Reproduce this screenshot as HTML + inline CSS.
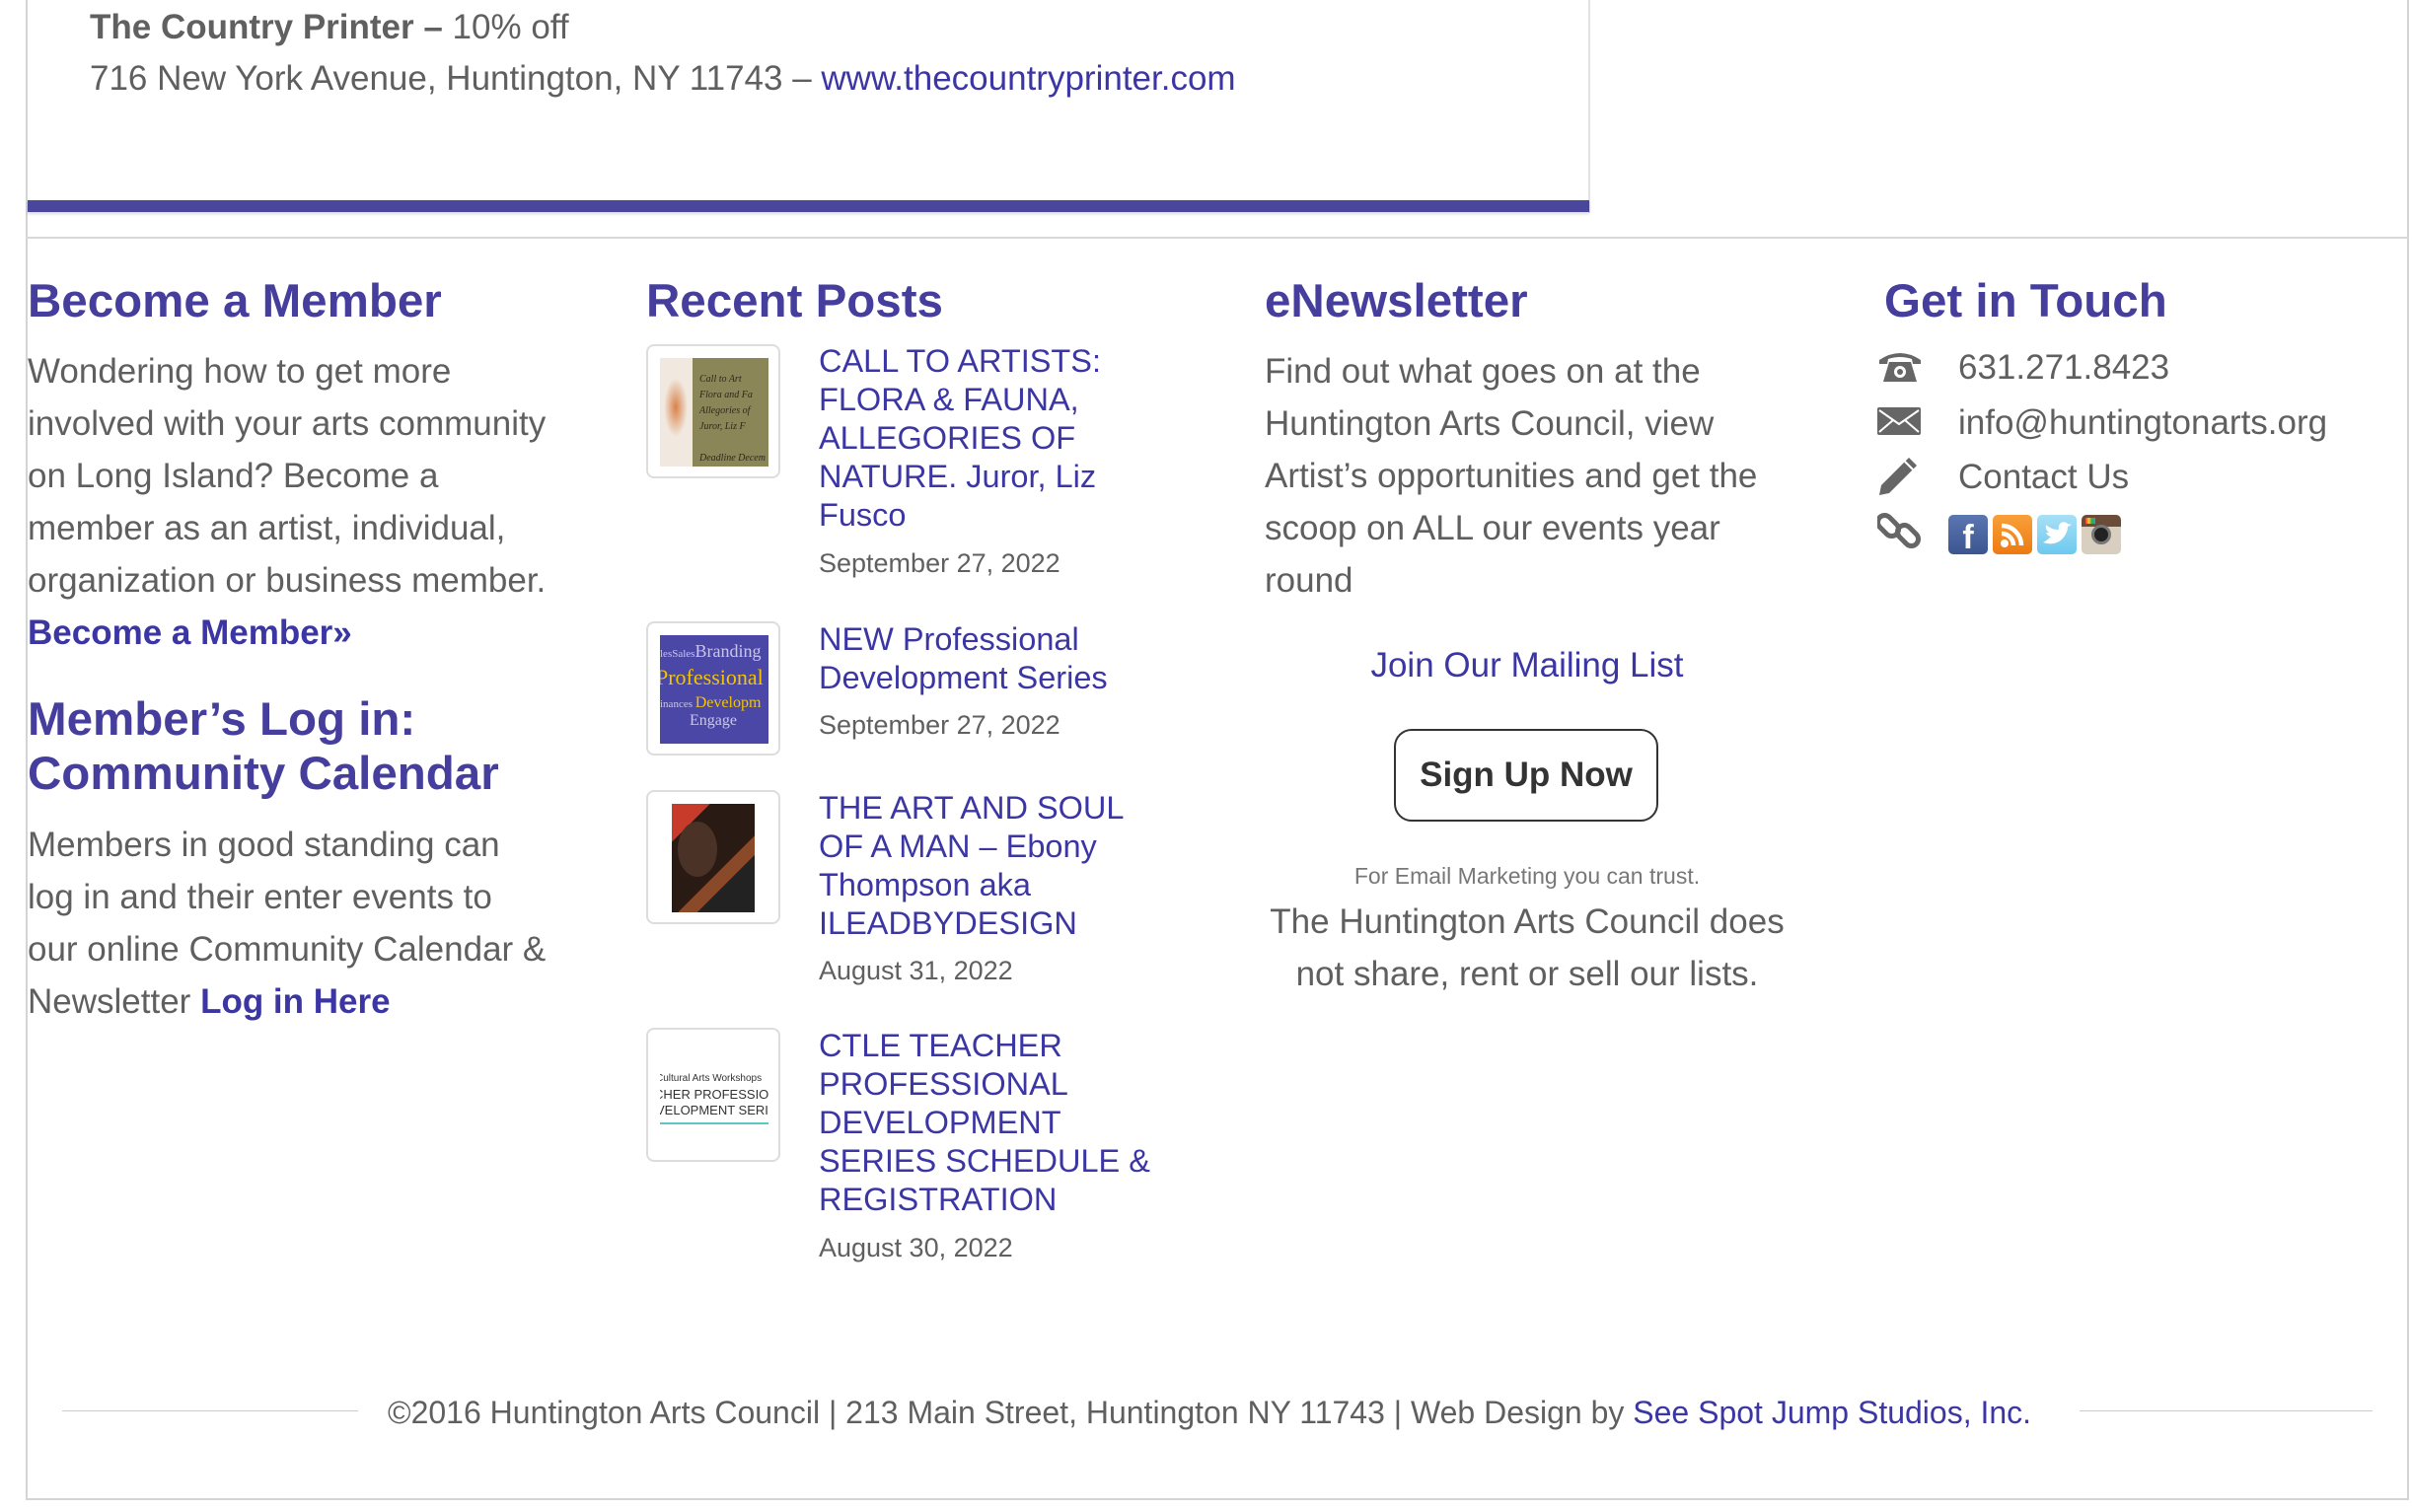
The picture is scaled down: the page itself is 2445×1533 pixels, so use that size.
<!DOCTYPE html>
<html><head><meta charset="utf-8"><style>
*{margin:0;padding:0;box-sizing:border-box}
body{width:2445px;height:1533px;background:#fff;position:relative;overflow:hidden;font-family:"Liberation Sans",Arial,sans-serif;color:#5f5f5f}
.a{position:absolute;white-space:nowrap}
.h{position:absolute;color:#463e9d;font-weight:bold;font-size:47.5px;line-height:55px;white-space:nowrap}
.t{font-size:35px;line-height:53px}
.lk{color:#3b36a3}
.pt{position:absolute;left:830px;color:#3b36a3;font-size:32.5px;line-height:39px;width:350px}
.dt{position:absolute;left:830px;font-size:27px;color:#606060}
.th{position:absolute;left:655px;width:136px;height:136px;border:2px solid #ddd;border-radius:8px;background:#fff;overflow:hidden}
.th>div{position:absolute;left:12px;top:12px;width:110px;height:110px;overflow:hidden}
.ic{position:absolute;width:40px;height:40px;border-radius:5px;color:#fff;font-weight:bold;text-align:center}
</style></head><body>
<div class="a" style="left:26px;top:0;width:2px;height:1521px;background:#d4d4d4"></div>
<div class="a" style="left:2440px;top:0;width:2px;height:1521px;background:#d4d4d4"></div>
<div class="a" style="left:26px;top:1519px;width:2416px;height:2px;background:#d4d4d4"></div>
<div class="a" style="left:26px;top:240px;width:2416px;height:2px;background:#d8d8d8"></div>
<div class="a" style="left:1610px;top:0;width:2px;height:216px;background:#e2e2e2"></div>
<div class="a" style="left:28px;top:203px;width:1583px;height:12px;background:#4a469c;box-shadow:0 2px 3px rgba(0,0,0,.15)"></div>

<div class="a t" style="left:91px;top:1px;color:#606060"><b>The Country Printer –</b> 10% off</div>
<div class="a t" style="left:91px;top:53px">716 New York Avenue, Huntington, NY 11743 – <span class="lk">www.thecountryprinter.com</span></div>

<div class="h" style="left:28px;top:278px">Become a Member</div>
<div class="a t" style="left:28px;top:350px;white-space:normal;width:531px">Wondering how to get more involved with your arts community on Long Island? Become a member as an artist, individual, organization or business member.<br><b class="lk">Become a Member»</b></div>
<div class="h" style="left:28px;top:702px">Member’s Log in:<br>Community Calendar</div>
<div class="a t" style="left:28px;top:830px;white-space:normal;width:531px">Members in good standing can log in and their enter events to our online Community Calendar &amp; Newsletter <b class="lk">Log in Here</b></div>

<div class="h" style="left:655px;top:278px">Recent Posts</div>
<div class="th" style="top:349px"><div style="background:linear-gradient(90deg,#f1e9e0 0 30%,#8a8657 30%)"><span style="position:absolute;left:4px;top:20px;width:24px;height:60px;background:radial-gradient(#d9824a,transparent 70%)"></span><span style="position:absolute;left:40px;top:14px;font:italic 10px 'Liberation Serif';color:#2e2a18;line-height:16px">Call to Art<br>Flora and Fa<br>Allegories of<br>Juror, Liz F<br><br>Deadline Decem</span></div></div>
<div class="pt" style="top:347px">CALL TO ARTISTS: FLORA &amp; FAUNA, ALLEGORIES OF NATURE. Juror, Liz Fusco</div>
<div class="dt" style="top:556px">September 27, 2022</div>

<div class="th" style="top:630px"><div style="background:#4b47a6;font-family:'Liberation Serif';color:#c9c6ee;font-size:11px;line-height:13px"><span style="position:absolute;left:0;top:10px">lesSales<span style="font-size:18px">Branding</span></span><span style="position:absolute;left:-4px;top:36px;font-size:22px;color:#f2c500">Professional</span><span style="position:absolute;left:0;top:62px">inances <span style="font-size:16px;color:#f2c500">Developm</span></span><span style="position:absolute;left:30px;top:80px;font-size:16px">Engage</span></div></div>
<div class="pt" style="top:629px">NEW Professional Development Series</div>
<div class="dt" style="top:720px">September 27, 2022</div>

<div class="th" style="top:801px"><div style="left:24px;width:84px;background:linear-gradient(135deg,#c83a2a 0 20%,#2a1a14 20% 60%,#8a4a2a 60% 70%,#222 70%)"><span style="position:absolute;left:6px;top:18px;width:40px;height:56px;border-radius:50%;background:#4a3226"></span></div></div>
<div class="pt" style="top:800px">THE ART AND SOUL OF A MAN – Ebony Thompson aka ILEADBYDESIGN</div>
<div class="dt" style="top:969px">August 31, 2022</div>

<div class="th" style="top:1042px"><div style="font-size:10px;line-height:16px;color:#333;padding-top:30px;white-space:nowrap"><div style="margin-left:-4px">Cultural Arts Workshops</div><div style="font-size:13px;margin-left:-6px">CHER PROFESSIO</div><div style="font-size:13px;margin-left:-4px">VELOPMENT SERI</div><div style="height:2px;background:#5cc6c0;margin-top:4px"></div></div></div>
<div class="pt" style="top:1041px">CTLE TEACHER PROFESSIONAL DEVELOPMENT SERIES SCHEDULE &amp; REGISTRATION</div>
<div class="dt" style="top:1250px">August 30, 2022</div>

<div class="h" style="left:1282px;top:278px">eNewsletter</div>
<div class="a t" style="left:1282px;top:350px;white-space:normal;width:540px">Find out what goes on at the Huntington Arts Council, view Artist’s opportunities and get the scoop on ALL our events year round</div>
<div class="a lk" style="left:1282px;width:532px;text-align:center;top:655px;font-size:35px">Join Our Mailing List</div>
<div class="a" style="left:1413px;top:739px;width:268px;height:94px;border:2px solid #333;border-radius:18px;text-align:center;line-height:90px;font-size:35px;font-weight:bold;color:#333">Sign Up Now</div>
<div class="a" style="left:1282px;width:532px;text-align:center;top:875px;font-size:23px;color:#777">For Email Marketing you can trust.</div>
<div class="a t" style="left:1272px;width:552px;text-align:center;top:908px;white-space:normal">The Huntington Arts Council does not share, rent or sell our lists.</div>

<div class="h" style="left:1910px;top:278px">Get in Touch</div>
<svg class="a" style="left:1903px;top:355px" width="46" height="34" viewBox="0 0 46 34"><path d="M2 10 Q23 -4 44 10 L44 14 L36 14 L35 9 Q23 5 11 9 L10 14 L2 14Z" fill="#666"/><path d="M12 12 L34 12 L40 32 L6 32Z" fill="#666"/><circle cx="23" cy="22" r="6" fill="#fff"/><circle cx="23" cy="22" r="3" fill="#666"/></svg>
<div class="a t" style="left:1985px;top:346px">631.271.8423</div>
<svg class="a" style="left:1903px;top:413px" width="44" height="28" viewBox="0 0 44 28"><rect width="44" height="28" rx="2" fill="#666"/><path d="M2 3 L22 17 L42 3 M2 25 L16 13 M42 25 L28 13" stroke="#fff" stroke-width="2" fill="none"/></svg>
<div class="a t" style="left:1985px;top:402px">info@huntingtonarts.org</div>
<svg class="a" style="left:1903px;top:462px" width="42" height="42" viewBox="0 0 42 42"><path d="M32 2 L40 10 L12 38 L2 40 L4 30Z" fill="#666"/><path d="M28 6 L36 14" stroke="#fff" stroke-width="2"/></svg>
<div class="a t" style="left:1985px;top:457px">Contact Us</div>
<svg class="a" style="left:1903px;top:517px" width="44" height="42" viewBox="0 0 44 42"><g fill="none" stroke="#666" stroke-width="5"><rect x="4" y="4" width="14" height="24" rx="7" transform="rotate(-45 11 16)"/><rect x="24" y="14" width="14" height="24" rx="7" transform="rotate(-45 31 26)"/></g></svg>
<div class="ic" style="left:1975px;top:522px;background:linear-gradient(#5b76b0,#3b5590);font-size:34px;line-height:46px">f</div>
<div class="ic" style="left:2020px;top:522px;background:linear-gradient(#f9a03a,#ed7a12)"><svg width="40" height="40" viewBox="0 0 40 40"><circle cx="12" cy="29" r="4" fill="#fff"/><path d="M9 19 A12 12 0 0 1 21 31 M9 11 A20 20 0 0 1 29 31" stroke="#fff" stroke-width="4.5" fill="none"/></svg></div>
<div class="ic" style="left:2065px;top:522px;background:linear-gradient(#a8e0f6,#6cc9ef)"><svg width="40" height="40" viewBox="0 0 40 40"><path d="M6 28 Q18 32 26 24 Q31 18 31 12 L35 10 L31 9 Q28 6 24 8 Q21 11 22 15 Q14 15 9 10 Q8 15 12 18 L9 18 Q11 22 14 22 Q10 26 6 28Z" fill="#fff"/></svg></div>
<div class="ic" style="left:2110px;top:522px;background:linear-gradient(#6a4c38 0 30%,#d8cfc0 30%)"><div style="position:absolute;left:10px;top:10px;width:20px;height:20px;border-radius:50%;background:#222;border:3px solid #777"></div><div style="position:absolute;left:4px;top:3px;width:10px;height:6px;background:linear-gradient(90deg,#e33,#fc3,#3a3,#39f)"></div></div>

<div class="a" style="left:63px;top:1430px;width:300px;height:1px;background:#ccc"></div>
<div class="a" style="left:2108px;top:1430px;width:297px;height:1px;background:#ccc"></div>
<div class="a" style="left:393px;top:1412px;font-size:32px;line-height:40px">©2016 Huntington Arts Council | 213 Main Street, Huntington NY 11743 | Web Design by <span class="lk">See Spot Jump Studios, Inc.</span></div>
</body></html>
